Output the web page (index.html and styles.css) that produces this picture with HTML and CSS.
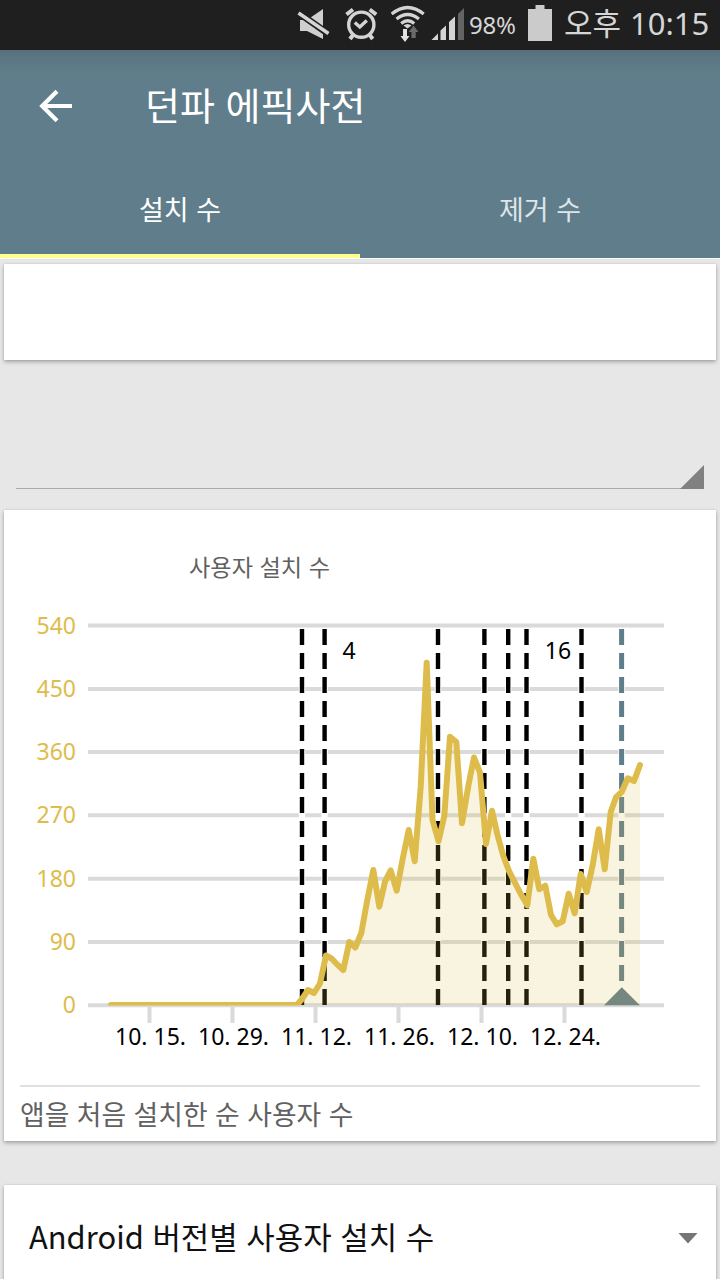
FILE: index.html
```html
<!DOCTYPE html>
<html lang="ko">
<head>
  <meta charset="UTF-8">
  <meta name="viewport" content="width=device-width, initial-scale=1.0">
  <title>던파 에픽사전</title>
  <link rel="stylesheet" href="styles.css">
</head>
<body>

<!-- Status bar -->
<div class="status-bar">
  <svg class="status-icons" width="188" height="50" viewBox="280 0 188 50">
    <!-- muted speaker -->
    <path d="M300 20h7l16-11v30l-16-8h-7z" fill="#cfcfcf"/>
    <path d="M296 11l34 24" stroke="#1f1f1f" stroke-width="7"/>
    <path d="M298.500 13l30 20.500" stroke="#d4d4d4" stroke-width="3.600"/>
    <!-- alarm -->
    <g fill="none" stroke="#d4d4d4" stroke-width="3.400">
      <circle cx="361.300" cy="24.700" r="12.600"/>
      <path d="M354.800 22.500l5 4.500 7-6.500"/>
      <path d="M346.500 14.500l6.500-5M376.200 14.500l-6.500-5" stroke-width="4"/>
      <path d="M353 35l-3 4M369.700 35l3 4" stroke-width="4"/>
    </g>
    <!-- wifi with traffic arrows -->
    <g fill="none" stroke="#d4d4d4" stroke-width="3.200">
      <path d="M391.700 14q16-13 32 0"/>
      <path d="M396.500 19q11.200-9 22.400 0"/>
      <path d="M401.200 23.500q6.500-5.500 13 0"/>
    </g>
    <path d="M403.500 25.500q4-3 8 0l-4 3z" fill="#d4d4d4"/>
    <path d="M403 29h4v7h2.500l-4.500 6-4.500-6h2.500z" fill="#e2e2e2"/>
    <path d="M411.500 38v-6h-2.800l4.900-6.500 4.900 6.500h-2.800v6z" fill="#6b6b6b"/>
    <!-- signal -->
    <path d="M431.500 40l6.500-6.500v6.500z" fill="#d4d4d4"/>
    <path d="M440.500 30.500l5.500-5v14.500h-5.500z" fill="#d4d4d4"/>
    <path d="M449 22l6-5.500v23.500h-6z" fill="#d4d4d4"/>
    <path d="M458 14l6-6v32h-6z" fill="#646464"/>
  </svg>
  <span class="percent">98%</span>
  <svg class="battery" width="24" height="50" viewBox="0 0 24 50">
    <path d="M0 9h7.500V5h9v4H24v32H0z" fill="#cbcbcb"/>
  </svg>
  <span class="meridiem">오후</span>
  <span class="clock">10:15</span>
</div>

<!-- App header -->
<header class="header">
  <div class="toolbar">
    <svg class="back" width="34" height="34" viewBox="0 0 34 34" fill="none" stroke="#fff" stroke-width="4.200">
      <path d="M18 2.200L3.200 17 18 31.800M3 17h30"/>
    </svg>
    <h1 class="title">던파 에픽사전</h1>
  </div>
  <nav class="tabs">
    <div class="tab active">설치 수</div>
    <div class="tab">제거 수</div>
  </nav>
</header>

<main class="content">
  <section class="card blank"></section>

  <div class="spinner">
    <div class="corner"></div>
  </div>

  <section class="card chart-card">
    <h2 class="chart-title">사용자 설치 수</h2>
    <svg class="chart" width="712" height="470" viewBox="4 600 712 470">
      <defs>
        <clipPath id="plot"><rect x="88" y="610" width="580" height="395.500"/></clipPath>
      </defs>

      <path class="grid" d="M88 625.500h576M88 689h576M88 752h576M88 815.300h576M88 878.700h576M88 942h576M88 1005.300h576"/>
      <path class="grid" d="M149.500 1007v16M232.500 1007v16M315.500 1007v16M398.500 1007v16M481.500 1007v16M564.500 1007v16"/>

      <!-- update markers -->
      <path class="marker-gap" d="M302 629v374M324.600 629v374M438 629v374M484.400 629v374M508.200 629v374M526.500 629v374M581.500 629v374M621.600 629v374"/>
      <path class="marker" d="M302 629v376M324.600 629v376M438 629v376M484.400 629v376M508.200 629v376M526.500 629v376M581.500 629v376"/>
      <path class="marker current" d="M621.600 629v356"/>
      <path d="M604 1005.300l17.800-18 18 18z" fill="#607d8b"/>

      <g clip-path="url(#plot)">
        <path class="area" d="M111 1005L297 1005 302 999 308 990 314 993 320 983.500 326 955.500 331.500 958.500 337.300 964.500 343.300 970 349.300 942 355.300 947.500 361.300 933 367.300 900 373.300 870 379.300 906.700 385 881.500 390.700 870.500 396.700 890.700 402.700 858.700 408.700 830 414.700 861.300 420.700 787 426.700 662.700 432.500 820 438.500 841.300 444.300 816 450 736.700 456.300 742 462 823.300 468.500 785 474 757.500 480 772.700 486 844 492 810.700 497.500 835 503.300 856 509.300 871.700 515.300 883.300 521.300 895 527.300 905.300 533.300 858.700 539.300 889.300 545.300 885.700 551 915 556.700 924.300 562.700 921.300 568.700 893.700 574.700 913.300 580.700 874 586.700 892 592.700 865 598.700 829.300 604.700 869.300 610.700 812 616 797.300 621.700 792 627.700 778.300 634 781 640 765V1005z"/>
        <path class="line" d="M111 1005L297 1005 302 999 308 990 314 993 320 983.500 326 955.500 331.500 958.500 337.300 964.500 343.300 970 349.300 942 355.300 947.500 361.300 933 367.300 900 373.300 870 379.300 906.700 385 881.500 390.700 870.500 396.700 890.700 402.700 858.700 408.700 830 414.700 861.300 420.700 787 426.700 662.700 432.500 820 438.500 841.300 444.300 816 450 736.700 456.300 742 462 823.300 468.500 785 474 757.500 480 772.700 486 844 492 810.700 497.500 835 503.300 856 509.300 871.700 515.300 883.300 521.300 895 527.300 905.300 533.300 858.700 539.300 889.300 545.300 885.700 551 915 556.700 924.300 562.700 921.300 568.700 893.700 574.700 913.300 580.700 874 586.700 892 592.700 865 598.700 829.300 604.700 869.300 610.700 812 616 797.300 621.700 792 627.700 778.300 634 781 640 765"/>
      </g>

      <g class="y-labels">
        <text x="76" y="633.500">540</text>
        <text x="76" y="697">450</text>
        <text x="76" y="760">360</text>
        <text x="76" y="823.300">270</text>
        <text x="76" y="886.700">180</text>
        <text x="76" y="950">90</text>
        <text x="76" y="1013.300">0</text>
      </g>
      <g class="x-labels">
        <text x="150.500" y="1044.700">10. 15.</text>
        <text x="233.500" y="1044.700">10. 29.</text>
        <text x="316.500" y="1044.700">11. 12.</text>
        <text x="399.500" y="1044.700">11. 26.</text>
        <text x="482.500" y="1044.700">12. 10.</text>
        <text x="565.500" y="1044.700">12. 24.</text>
        <text x="349" y="659">4</text>
        <text x="558" y="659">16</text>
      </g>
    </svg>
    <p class="caption">앱을 처음 설치한 순 사용자 수</p>
  </section>

  <section class="card dropdown">
    <span class="dropdown-label">Android 버전별 사용자 설치 수</span>
    <span class="caret"></span>
  </section>
</main>

</body>
</html>
```
FILE: styles.css
```css
* {
  box-sizing: border-box;
}

body {
  margin: 0;
  height: 1279px;
  overflow: hidden;
  background: #e7e7e7;
  font-family: "Noto Sans CJK KR", sans-serif;
}

h1, h2, p {
  margin: 0;
  font-weight: 400;
}

/* Status bar */
.status-bar {
  display: flex;
  align-items: center;
  height: 50px;
  padding-left: 280px;
  background: #1f1f1f;
  color: #d6d6d6;
  white-space: nowrap;
}

.status-icons,
.battery {
  flex: none;
}

.percent {
  width: 60px;
  padding-left: 1px;
  font-family: "Noto Sans", sans-serif;
  font-size: 24px;
  letter-spacing: -0.2px;
  line-height: 50px;
}

.meridiem {
  width: 78px;
  padding-left: 12px;
  font-size: 31px;
  line-height: 44px;
  height: 50px;
}

.clock {
  font-family: "Noto Sans", sans-serif;
  font-size: 31px;
  line-height: 47px;
  height: 50px;
}

/* Header */
.header {
  height: 208px;
  background: linear-gradient(#566f7b 0, #5c7783 8px, #607d8b 24px);
  color: #fff;
}

.toolbar {
  display: flex;
  align-items: center;
  height: 112px;
  padding-left: 39px;
}

.title {
  margin: -4px 0 0 72px;
  font-size: 38px;
  line-height: 56px;
}

.tabs {
  display: flex;
  height: 96px;
}

.tab {
  flex: 1;
  text-align: center;
  font-size: 27px;
  line-height: 94px;
  color: #dfe5e8;
}

.tab.active {
  color: #fff;
  border-bottom: 4px solid #ffff8d;
}

/* Content */
.content {
  padding: 6px 4px 0;
  box-shadow: inset 0 1px #fafafa;
}

.card {
  background: #fff;
  box-shadow: 0 2px 4px rgba(0, 0, 0, 0.28), 0 0 2px rgba(0, 0, 0, 0.1);
}

.blank {
  height: 96px;
}

.spinner {
  display: flex;
  justify-content: flex-end;
  align-items: flex-end;
  height: 129px;
  margin: 0 12px 21px;
  border-bottom: 1px solid #aaa;
}

.corner {
  width: 24px;
  height: 24px;
  margin-bottom: -1px;
  background: #808080;
  clip-path: polygon(100% 0, 100% 100%, 0 100%);
}

.chart-card {
  height: 631px;
}

.chart-title {
  height: 90px;
  padding: 39px 0 0 185px;
  font-size: 23.2px;
  line-height: 35px;
  color: #616161;
}

.chart {
  display: block;
  font-family: "Noto Sans", sans-serif;
  font-size: 23px;
}

.grid {
  stroke: #dadada;
  stroke-width: 4;
}

.marker-gap {
  stroke: #fff;
  stroke-width: 6.4;
}

.marker {
  stroke: #000;
  stroke-width: 4.4;
  stroke-dasharray: 16 8;
}

.marker.current {
  stroke: #607d8b;
  stroke-width: 5;
}

.area {
  fill: #dabf45;
  fill-opacity: 0.17;
}

.line {
  fill: none;
  stroke: #debc4b;
  stroke-width: 6;
  stroke-linejoin: round;
  stroke-linecap: round;
}

.y-labels {
  fill: #debc4b;
  text-anchor: end;
}

.x-labels {
  fill: #000;
  text-anchor: middle;
}

.caption {
  margin: 15px 16px 0;
  border-top: 2px solid #e0e0e0;
  font-size: 26.8px;
  line-height: 54px;
  color: #616161;
}

/* Version dropdown */
.dropdown {
  display: flex;
  align-items: center;
  justify-content: space-between;
  height: 106px;
  margin-top: 44px;
  padding: 0 18px 0 25px;
}

.dropdown-label {
  margin-top: -5px;
  font-size: 30.9px;
  color: #111;
}

.caret {
  width: 20px;
  height: 11px;
  background: #757575;
  clip-path: polygon(0 0, 100% 0, 50% 100%);
}
```
